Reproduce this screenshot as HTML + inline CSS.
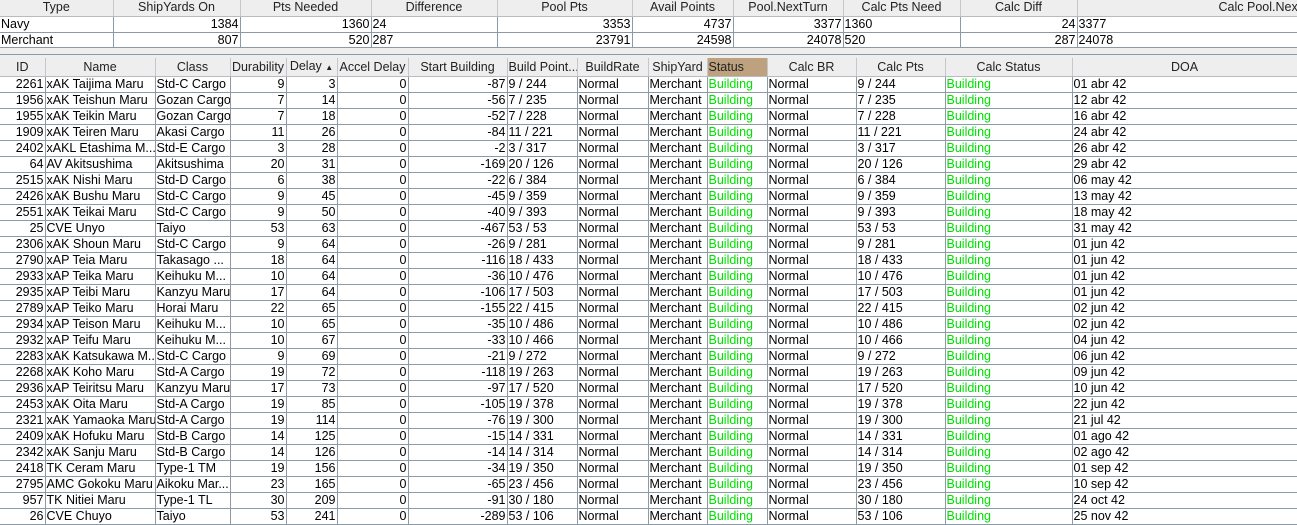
<!DOCTYPE html>
<html><head><meta charset="utf-8"><style>
*{margin:0;padding:0;box-sizing:border-box}
body{width:1297px;height:523px;overflow:hidden;background:#fff;font-family:"Liberation Sans",Arial,sans-serif;font-size:12.5px;color:#000;position:relative}
table{border-collapse:collapse;table-layout:fixed;position:absolute;left:0;width:1297px}
td,th{height:16px;line-height:15px;padding:0 1px;white-space:nowrap;overflow:hidden;border-right:1px solid #8d99a5;border-bottom:1px solid #8d99a5;font-weight:normal}
th{background:#eeeeee;text-align:center;color:#222;border-right:1px solid #c4c8cc;border-bottom:1px solid #b8bcc0}
td.r{text-align:right}
td.g{color:#00e000}
#top{top:0}
#gap{position:absolute;left:0;top:47px;width:1297px;height:11px;background:#eeeeee;border-top:1px solid #8d99a5}
#gap:after{content:"";position:absolute;left:0;right:0;top:6px;height:3px;border-top:1px solid #8d99a5;border-bottom:1px solid #b8bcc0}
#bot{top:58px}
#bot th{height:17px;line-height:16px}
th.st{background:#bea27f;text-align:left}
</style></head><body>
<table id="top">
<colgroup><col style="width:113px"><col style="width:127px"><col style="width:131px"><col style="width:126px"><col style="width:135px"><col style="width:101px"><col style="width:110px"><col style="width:117px"><col style="width:117px"><col style="width:220px"></colgroup>
<tr><th>Type</th><th>ShipYards On</th><th>Pts Needed</th><th>Difference</th><th>Pool Pts</th><th>Avail Points</th><th>Pool.NextTurn</th><th>Calc Pts Need</th><th>Calc Diff</th><th style="text-align:left;padding-left:141px">Calc Pool.Next</th></tr>
<tr><td>Navy</td><td class="r">1384</td><td class="r">1360</td><td>24</td><td class="r">3353</td><td class="r">4737</td><td class="r">3377</td><td>1360</td><td class="r">24</td><td>3377</td></tr>
<tr><td>Merchant</td><td class="r">807</td><td class="r">520</td><td>287</td><td class="r">23791</td><td class="r">24598</td><td class="r">24078</td><td>520</td><td class="r">287</td><td>24078</td></tr>
</table>
<div id="gap"></div>
<table id="bot">
<colgroup><col style="width:45px"><col style="width:110px"><col style="width:75px"><col style="width:56px"><col style="width:51px"><col style="width:71px"><col style="width:99px"><col style="width:70px"><col style="width:71px"><col style="width:59px"><col style="width:60px"><col style="width:89px"><col style="width:89px"><col style="width:127px"><col style="width:225px"></colgroup>
<tr><th>ID</th><th>Name</th><th>Class</th><th>Durability</th><th>Delay <span style="font-size:8px">▲</span></th><th>Accel Delay</th><th>Start Building</th><th>Build Point...</th><th>BuildRate</th><th>ShipYard</th><th class="st">Status</th><th>Calc BR</th><th>Calc Pts</th><th>Calc Status</th><th>DOA</th></tr>
<tr><td class="r">2261</td><td>xAK Taijima Maru</td><td>Std-C Cargo</td><td class="r">9</td><td class="r">3</td><td class="r">0</td><td class="r">-87</td><td>9 / 244</td><td>Normal</td><td>Merchant</td><td class="g">Building</td><td>Normal</td><td>9 / 244</td><td class="g">Building</td><td>01 abr 42</td></tr>
<tr><td class="r">1956</td><td>xAK Teishun Maru</td><td>Gozan Cargo</td><td class="r">7</td><td class="r">14</td><td class="r">0</td><td class="r">-56</td><td>7 / 235</td><td>Normal</td><td>Merchant</td><td class="g">Building</td><td>Normal</td><td>7 / 235</td><td class="g">Building</td><td>12 abr 42</td></tr>
<tr><td class="r">1955</td><td>xAK Teikin Maru</td><td>Gozan Cargo</td><td class="r">7</td><td class="r">18</td><td class="r">0</td><td class="r">-52</td><td>7 / 228</td><td>Normal</td><td>Merchant</td><td class="g">Building</td><td>Normal</td><td>7 / 228</td><td class="g">Building</td><td>16 abr 42</td></tr>
<tr><td class="r">1909</td><td>xAK Teiren Maru</td><td>Akasi Cargo</td><td class="r">11</td><td class="r">26</td><td class="r">0</td><td class="r">-84</td><td>11 / 221</td><td>Normal</td><td>Merchant</td><td class="g">Building</td><td>Normal</td><td>11 / 221</td><td class="g">Building</td><td>24 abr 42</td></tr>
<tr><td class="r">2402</td><td>xAKL Etashima M...</td><td>Std-E Cargo</td><td class="r">3</td><td class="r">28</td><td class="r">0</td><td class="r">-2</td><td>3 / 317</td><td>Normal</td><td>Merchant</td><td class="g">Building</td><td>Normal</td><td>3 / 317</td><td class="g">Building</td><td>26 abr 42</td></tr>
<tr><td class="r">64</td><td>AV Akitsushima</td><td>Akitsushima</td><td class="r">20</td><td class="r">31</td><td class="r">0</td><td class="r">-169</td><td>20 / 126</td><td>Normal</td><td>Merchant</td><td class="g">Building</td><td>Normal</td><td>20 / 126</td><td class="g">Building</td><td>29 abr 42</td></tr>
<tr><td class="r">2515</td><td>xAK Nishi Maru</td><td>Std-D Cargo</td><td class="r">6</td><td class="r">38</td><td class="r">0</td><td class="r">-22</td><td>6 / 384</td><td>Normal</td><td>Merchant</td><td class="g">Building</td><td>Normal</td><td>6 / 384</td><td class="g">Building</td><td>06 may 42</td></tr>
<tr><td class="r">2426</td><td>xAK Bushu Maru</td><td>Std-C Cargo</td><td class="r">9</td><td class="r">45</td><td class="r">0</td><td class="r">-45</td><td>9 / 359</td><td>Normal</td><td>Merchant</td><td class="g">Building</td><td>Normal</td><td>9 / 359</td><td class="g">Building</td><td>13 may 42</td></tr>
<tr><td class="r">2551</td><td>xAK Teikai Maru</td><td>Std-C Cargo</td><td class="r">9</td><td class="r">50</td><td class="r">0</td><td class="r">-40</td><td>9 / 393</td><td>Normal</td><td>Merchant</td><td class="g">Building</td><td>Normal</td><td>9 / 393</td><td class="g">Building</td><td>18 may 42</td></tr>
<tr><td class="r">25</td><td>CVE Unyo</td><td>Taiyo</td><td class="r">53</td><td class="r">63</td><td class="r">0</td><td class="r">-467</td><td>53 / 53</td><td>Normal</td><td>Merchant</td><td class="g">Building</td><td>Normal</td><td>53 / 53</td><td class="g">Building</td><td>31 may 42</td></tr>
<tr><td class="r">2306</td><td>xAK Shoun Maru</td><td>Std-C Cargo</td><td class="r">9</td><td class="r">64</td><td class="r">0</td><td class="r">-26</td><td>9 / 281</td><td>Normal</td><td>Merchant</td><td class="g">Building</td><td>Normal</td><td>9 / 281</td><td class="g">Building</td><td>01 jun 42</td></tr>
<tr><td class="r">2790</td><td>xAP Teia Maru</td><td>Takasago ...</td><td class="r">18</td><td class="r">64</td><td class="r">0</td><td class="r">-116</td><td>18 / 433</td><td>Normal</td><td>Merchant</td><td class="g">Building</td><td>Normal</td><td>18 / 433</td><td class="g">Building</td><td>01 jun 42</td></tr>
<tr><td class="r">2933</td><td>xAP Teika Maru</td><td>Keihuku M...</td><td class="r">10</td><td class="r">64</td><td class="r">0</td><td class="r">-36</td><td>10 / 476</td><td>Normal</td><td>Merchant</td><td class="g">Building</td><td>Normal</td><td>10 / 476</td><td class="g">Building</td><td>01 jun 42</td></tr>
<tr><td class="r">2935</td><td>xAP Teibi Maru</td><td>Kanzyu Maru</td><td class="r">17</td><td class="r">64</td><td class="r">0</td><td class="r">-106</td><td>17 / 503</td><td>Normal</td><td>Merchant</td><td class="g">Building</td><td>Normal</td><td>17 / 503</td><td class="g">Building</td><td>01 jun 42</td></tr>
<tr><td class="r">2789</td><td>xAP Teiko Maru</td><td>Horai Maru</td><td class="r">22</td><td class="r">65</td><td class="r">0</td><td class="r">-155</td><td>22 / 415</td><td>Normal</td><td>Merchant</td><td class="g">Building</td><td>Normal</td><td>22 / 415</td><td class="g">Building</td><td>02 jun 42</td></tr>
<tr><td class="r">2934</td><td>xAP Teison Maru</td><td>Keihuku M...</td><td class="r">10</td><td class="r">65</td><td class="r">0</td><td class="r">-35</td><td>10 / 486</td><td>Normal</td><td>Merchant</td><td class="g">Building</td><td>Normal</td><td>10 / 486</td><td class="g">Building</td><td>02 jun 42</td></tr>
<tr><td class="r">2932</td><td>xAP Teifu Maru</td><td>Keihuku M...</td><td class="r">10</td><td class="r">67</td><td class="r">0</td><td class="r">-33</td><td>10 / 466</td><td>Normal</td><td>Merchant</td><td class="g">Building</td><td>Normal</td><td>10 / 466</td><td class="g">Building</td><td>04 jun 42</td></tr>
<tr><td class="r">2283</td><td>xAK Katsukawa M...</td><td>Std-C Cargo</td><td class="r">9</td><td class="r">69</td><td class="r">0</td><td class="r">-21</td><td>9 / 272</td><td>Normal</td><td>Merchant</td><td class="g">Building</td><td>Normal</td><td>9 / 272</td><td class="g">Building</td><td>06 jun 42</td></tr>
<tr><td class="r">2268</td><td>xAK Koho Maru</td><td>Std-A Cargo</td><td class="r">19</td><td class="r">72</td><td class="r">0</td><td class="r">-118</td><td>19 / 263</td><td>Normal</td><td>Merchant</td><td class="g">Building</td><td>Normal</td><td>19 / 263</td><td class="g">Building</td><td>09 jun 42</td></tr>
<tr><td class="r">2936</td><td>xAP Teiritsu Maru</td><td>Kanzyu Maru</td><td class="r">17</td><td class="r">73</td><td class="r">0</td><td class="r">-97</td><td>17 / 520</td><td>Normal</td><td>Merchant</td><td class="g">Building</td><td>Normal</td><td>17 / 520</td><td class="g">Building</td><td>10 jun 42</td></tr>
<tr><td class="r">2453</td><td>xAK Oita Maru</td><td>Std-A Cargo</td><td class="r">19</td><td class="r">85</td><td class="r">0</td><td class="r">-105</td><td>19 / 378</td><td>Normal</td><td>Merchant</td><td class="g">Building</td><td>Normal</td><td>19 / 378</td><td class="g">Building</td><td>22 jun 42</td></tr>
<tr><td class="r">2321</td><td>xAK Yamaoka Maru</td><td>Std-A Cargo</td><td class="r">19</td><td class="r">114</td><td class="r">0</td><td class="r">-76</td><td>19 / 300</td><td>Normal</td><td>Merchant</td><td class="g">Building</td><td>Normal</td><td>19 / 300</td><td class="g">Building</td><td>21 jul 42</td></tr>
<tr><td class="r">2409</td><td>xAK Hofuku Maru</td><td>Std-B Cargo</td><td class="r">14</td><td class="r">125</td><td class="r">0</td><td class="r">-15</td><td>14 / 331</td><td>Normal</td><td>Merchant</td><td class="g">Building</td><td>Normal</td><td>14 / 331</td><td class="g">Building</td><td>01 ago 42</td></tr>
<tr><td class="r">2342</td><td>xAK Sanju Maru</td><td>Std-B Cargo</td><td class="r">14</td><td class="r">126</td><td class="r">0</td><td class="r">-14</td><td>14 / 314</td><td>Normal</td><td>Merchant</td><td class="g">Building</td><td>Normal</td><td>14 / 314</td><td class="g">Building</td><td>02 ago 42</td></tr>
<tr><td class="r">2418</td><td>TK Ceram Maru</td><td>Type-1 TM</td><td class="r">19</td><td class="r">156</td><td class="r">0</td><td class="r">-34</td><td>19 / 350</td><td>Normal</td><td>Merchant</td><td class="g">Building</td><td>Normal</td><td>19 / 350</td><td class="g">Building</td><td>01 sep 42</td></tr>
<tr><td class="r">2795</td><td>AMC Gokoku Maru</td><td>Aikoku Mar...</td><td class="r">23</td><td class="r">165</td><td class="r">0</td><td class="r">-65</td><td>23 / 456</td><td>Normal</td><td>Merchant</td><td class="g">Building</td><td>Normal</td><td>23 / 456</td><td class="g">Building</td><td>10 sep 42</td></tr>
<tr><td class="r">957</td><td>TK Nitiei Maru</td><td>Type-1 TL</td><td class="r">30</td><td class="r">209</td><td class="r">0</td><td class="r">-91</td><td>30 / 180</td><td>Normal</td><td>Merchant</td><td class="g">Building</td><td>Normal</td><td>30 / 180</td><td class="g">Building</td><td>24 oct 42</td></tr>
<tr><td class="r">26</td><td>CVE Chuyo</td><td>Taiyo</td><td class="r">53</td><td class="r">241</td><td class="r">0</td><td class="r">-289</td><td>53 / 106</td><td>Normal</td><td>Merchant</td><td class="g">Building</td><td>Normal</td><td>53 / 106</td><td class="g">Building</td><td>25 nov 42</td></tr>
</table>
</body></html>
